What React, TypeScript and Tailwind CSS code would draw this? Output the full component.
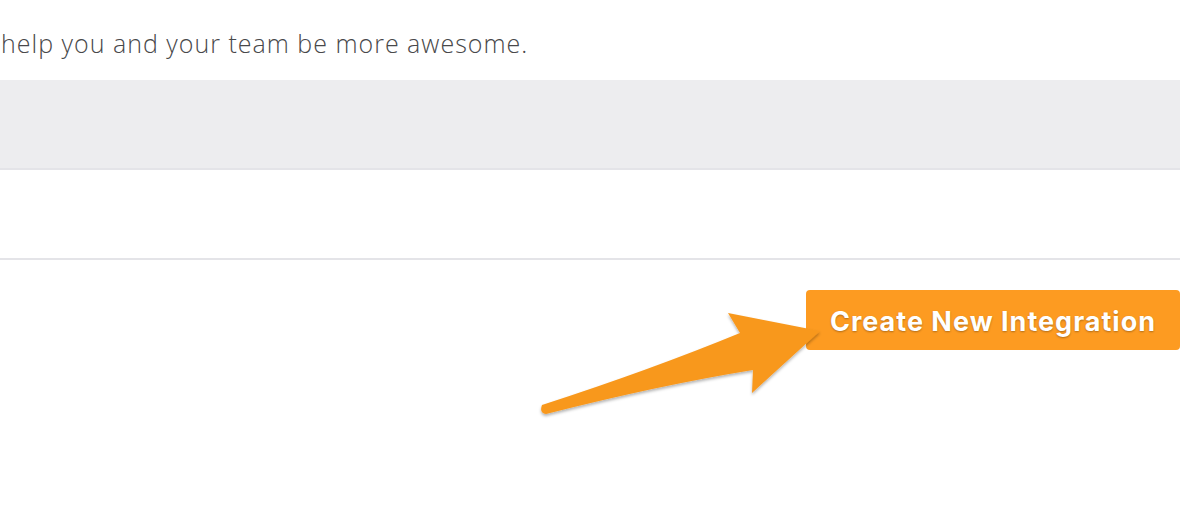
import React from "react";

export default function App() {
  return (
    <div className="relative w-[1198px] h-[508px] bg-white overflow-hidden">
      <div className="h-[80px] flex items-center">
        <p className="text-[25px] font-light text-[#48484a] leading-none pt-[6px] pl-[1px] tracking-[1px]" style={{ fontFamily: "'Open Sans', sans-serif" }}>
          help you and your team be more awesome.
        </p>
      </div>
      <div className="h-[88px] w-[1180px] bg-[#ededef]" />
      <div className="h-[2px] w-[1180px] bg-[#e4e4e8]" />
      <div className="h-[88px] w-[1180px]" />
      <div className="h-[2px] w-[1180px] bg-[#e4e4e8]" />
      <div className="w-[1180px] flex justify-end pt-[30px]">
        <button
          className="h-[60px] w-[374px] rounded-[4px] bg-[#fd9b21] text-white text-[27px] font-bold flex items-center justify-center tracking-[1px] pt-[5px]"
          style={{ fontFamily: "Inter, sans-serif", textShadow: "0 1px 2px rgba(0,0,0,0.3)" }}
        >
          Create New Integration
        </button>
      </div>
      <svg className="absolute left-0 top-0" width="1198" height="508" viewBox="0 0 1198 508">
        <defs>
          <filter id="sh" x="-10%" y="-10%" width="120%" height="130%">
            <feDropShadow dx="0" dy="2" stdDeviation="1.5" floodColor="#000" floodOpacity="0.3" />
          </filter>
        </defs>
        <path
          d="M542 405 Q 650 370 740 333 L 728 313 L 820 331 L 752 393 L 753 370 Q 660 385 546 414 Q 539 413 542 405 Z"
          fill="#f8981d"
          filter="url(#sh)"
        />
      </svg>
    </div>
  );
}
